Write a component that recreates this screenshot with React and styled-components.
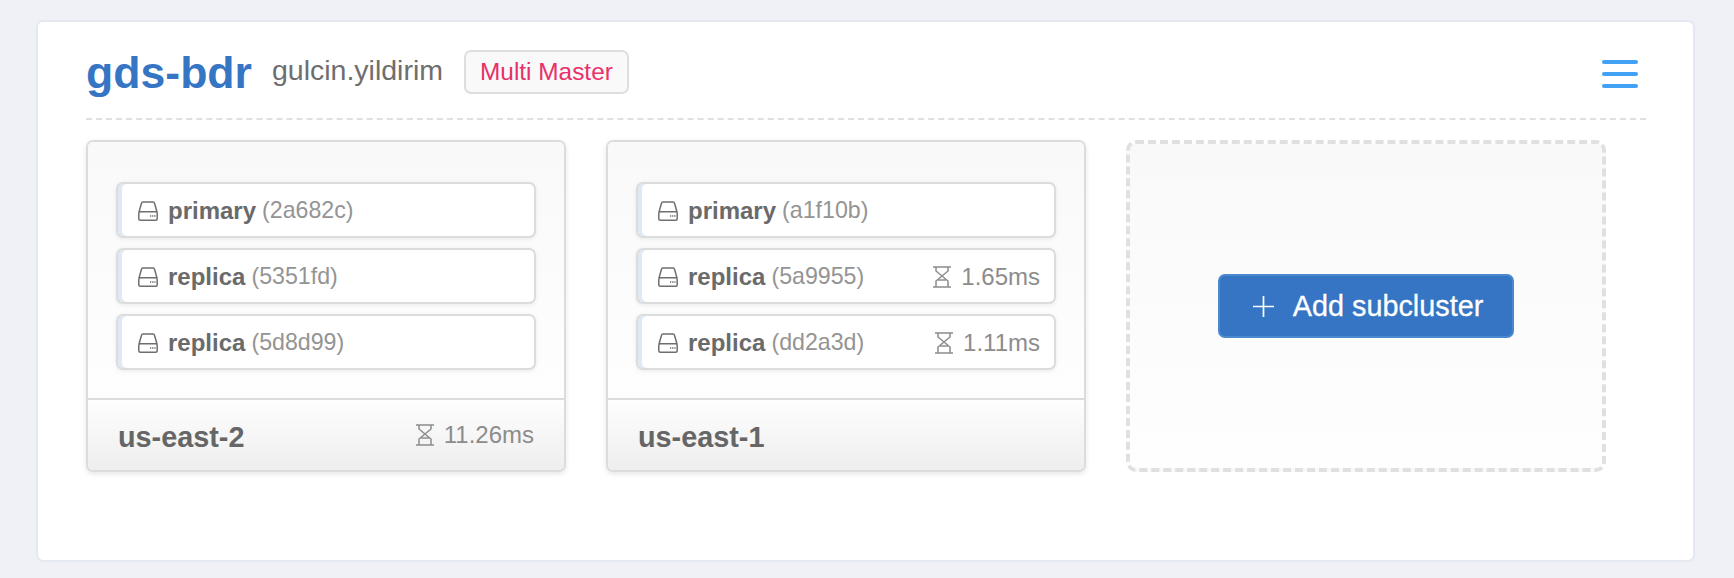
import React from 'react';
import styled, {createGlobalStyle} from 'styled-components';

const GlobalStyle = createGlobalStyle`
    html, body {
        margin:0;
        padding:0;
        background:#f0f1f6;
    }
    * {
        box-sizing:border-box;
    }
`

const Page = styled.div`
    width:1734px;
    height:578px;
    padding:20px 39px 16px 36px;
    font-family:"Liberation Sans", Arial, sans-serif;
`

const Panel = styled.div`
    height:100%;
    background:#fff;
    border:2px solid #e4e8f1;
    border-radius:7px;
    padding:0 47px 0 48px;
`

const Header = styled.div`
    height:98px;
    display:flex;
    align-items:center;
    border-bottom:2px dashed #e0e0e0;
    padding-top:4px;
`

const Title = styled.h1`
    margin:0 20px 0 0;
    font-size:44.6px;
    font-weight:bold;
    color:#3575c3;
    position:relative;
    top:1px;
`

const User = styled.span`
    font-size:28.5px;
    color:#6e6e6e;
    margin-right:21px;
    position:relative;
    top:-2px;
`

const Badge = styled.span`
    height:44px;
    display:flex;
    align-items:center;
    padding:0 14px;
    font-size:24.4px;
    color:#e8306a;
    background:#f9f9f9;
    border:2px solid #dedede;
    border-radius:7px;
`

const Menu = styled.button`
    margin-left:auto;
    margin-right:8px;
    width:36px;
    height:28px;
    padding:0;
    border:none;
    background:none;
    display:flex;
    flex-direction:column;
    justify-content:space-between;
    position:relative;
    top:2px;

    span{
        display:block;
        height:4px;
        border-radius:2px;
        background:#42a0f5;
    }
`

const Clusters = styled.div`
    display:flex;
    gap:40px;
    margin-top:20px;
`

const Card = styled.div`
    width:480px;
    height:332px;
    display:flex;
    flex-direction:column;
    border:2px solid #dcdcdc;
    border-radius:7px;
    box-shadow:0 2px 5px rgba(0,0,0,0.1);
    overflow:hidden;
`

const CardBody = styled.div`
    flex:1;
    display:flex;
    flex-direction:column;
    gap:10px;
    padding:40px 28px 0 28px;
    background:linear-gradient(#f9f9fa, #fefefe);
`

const Row = styled.div`
    height:56px;
    display:flex;
    align-items:center;
    padding:1px 14px 0 20px;
    background:#fff;
    border:2px solid #dcdcdc;
    border-radius:7px;
    box-shadow:inset 4px 0 0 #dfe9f5, 0 1px 4px rgba(0,0,0,0.08);
    font-size:24px;
`

const Name = styled.b`
    color:#6a6a6a;
    margin:0 6px 0 10px;
`

const Hash = styled.span`
    color:#949494;
    font-size:23.2px;
`

const Latency = styled.span`
    margin-left:auto;
    display:flex;
    align-items:center;
    gap:10px;
    color:#8c8c8c;
    font-size:24px;
`

const CardFooter = styled.div`
    height:72px;
    flex:none;
    display:flex;
    align-items:center;
    justify-content:space-between;
    padding:0 30px;
    border-top:2px solid #dcdcdc;
    background:linear-gradient(#fefefe, #eeeeee);
`

const Region = styled.b`
    font-size:28.8px;
    color:#666;
    position:relative;
    top:2px;
`

const AddCard = styled.div`
    width:480px;
    height:332px;
    display:flex;
    align-items:center;
    justify-content:center;
    border:4px dashed #e0e0e0;
    border-radius:10px;
    background:linear-gradient(#f9f9fa, #fefefe);
`

const AddButton = styled.button`
    width:296px;
    height:64px;
    display:flex;
    align-items:center;
    justify-content:center;
    gap:19px;
    padding:0 0 0 4px;
    font-family:inherit;
    font-size:28.8px;
    color:#fff;
    -webkit-text-stroke:0.3px #fff;
    background:#3575c3;
    border:2px solid #4a88d0;
    border-radius:7px;
`

const DriveIcon = () => (
    <svg width="20" height="20" viewBox="0 0 20 20" fill="none" stroke="#6e6e6e" strokeWidth="1.500">
        <path d="M1 11 L3.500 2.200 Q3.800 1 5 1 H15 Q16.200 1 16.500 2.200 L19 11" />
        <rect x="0.800" y="10.800" width="18.400" height="8.400" rx="1.500" />
        <path d="M12 15 h1.300 M14.100 15 h1.300 M16.200 15 h1.300" strokeWidth="1.700" />
    </svg>
)

const HourglassIcon = () => (
    <svg width="18" height="22" viewBox="0 0 18 22" fill="none" stroke="#8c8c8c" strokeWidth="1.500">
        <path d="M0 1 H18 M0 21 H18" />
        <path d="M3 1 V5 L15 15 V21 M15 1 V5 L3 15 V21" />
        <path d="M5 14 H13" />
    </svg>
)

const PlusIcon = () => (
    <svg width="21" height="21" viewBox="0 0 21 21" stroke="#fff" strokeWidth="1.700">
        <path d="M10.500 0 V21 M0 10.500 H21" />
    </svg>
)

const clusters = [
    {
        region: 'us-east-2',
        latency: '11.26ms',
        nodes: [
            {role: 'primary', id: '2a682c'},
            {role: 'replica', id: '5351fd'},
            {role: 'replica', id: '5d8d99'},
        ],
    },
    {
        region: 'us-east-1',
        nodes: [
            {role: 'primary', id: 'a1f10b'},
            {role: 'replica', id: '5a9955', latency: '1.65ms'},
            {role: 'replica', id: 'dd2a3d', latency: '1.11ms'},
        ],
    },
]

const App = () => {
    return (
        <Page>
            <GlobalStyle />
            <Panel>
                <Header>
                    <Title>gds-bdr</Title>
                    <User>gulcin.yildirim</User>
                    <Badge>Multi Master</Badge>
                    <Menu aria-label="menu">
                        <span /><span /><span />
                    </Menu>
                </Header>
                <Clusters>
                    {clusters.map(cluster => (
                        <Card key={cluster.region}>
                            <CardBody>
                                {cluster.nodes.map(node => (
                                    <Row key={node.id}>
                                        <DriveIcon />
                                        <Name>{node.role}</Name>
                                        <Hash>({node.id})</Hash>
                                        {node.latency && (
                                            <Latency><HourglassIcon />{node.latency}</Latency>
                                        )}
                                    </Row>
                                ))}
                            </CardBody>
                            <CardFooter>
                                <Region>{cluster.region}</Region>
                                {cluster.latency && (
                                    <Latency><HourglassIcon />{cluster.latency}</Latency>
                                )}
                            </CardFooter>
                        </Card>
                    ))}
                    <AddCard>
                        <AddButton><PlusIcon />Add subcluster</AddButton>
                    </AddCard>
                </Clusters>
            </Panel>
        </Page>
    )
}

export default App;
